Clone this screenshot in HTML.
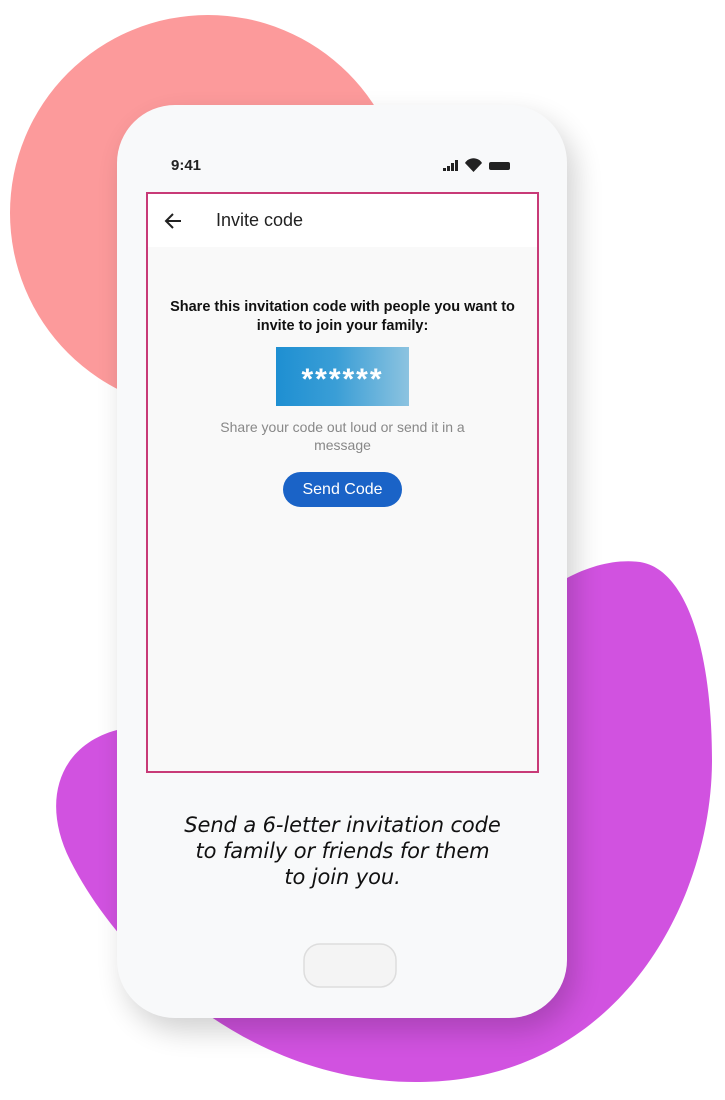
<!DOCTYPE html>
<html><head><meta charset="utf-8"><style>
body{margin:0;width:725px;height:1100px;background:#fff;position:relative;overflow:hidden;font-family:"Liberation Sans",sans-serif}
.abs{position:absolute}
</style></head><body>
<svg class="abs" style="left:0;top:0" width="725" height="1100">
<defs><filter id="sh" x="-20%" y="-20%" width="140%" height="140%"><feGaussianBlur stdDeviation="14"/></filter>
<linearGradient id="g" x1="0" x2="1"><stop offset="0" stop-color="#1e8fd2"/><stop offset="0.45" stop-color="#3a9ed6"/><stop offset="1" stop-color="#8cc3e0"/></linearGradient></defs>
<circle cx="208" cy="213" r="198" fill="#fc9a9b"/>
<path d="M117 730 L567 578 C590 566 615 559 640 562 C690 570 712 660 712 760 C712 900 620 1080 420 1082 C250 1084 120 960 70 860 C40 800 60 745 117 730 Z" fill="#d152e0"/>
<rect x="125" y="118" width="450" height="913" rx="58" fill="#000" opacity="0.18" filter="url(#sh)"/>
<rect x="117" y="105" width="450" height="913" rx="58" fill="#f8f9fa"/>
<rect x="147" y="193" width="391" height="579" fill="#f9f9f9" stroke="#c83a77" stroke-width="2"/>
<rect x="148" y="194" width="389" height="53" fill="#fff"/>
<path d="M181 221 H167 M173 214 L166 221 L173 228" stroke="#222" stroke-width="2" fill="none"/>
<rect x="276" y="347" width="133" height="59" fill="url(#g)"/>
<rect x="283" y="472" width="119" height="35" rx="17.5" fill="#1a63c7"/>
<rect x="304" y="944" width="92" height="43" rx="16" fill="#f4f4f4" stroke="#ddd" stroke-width="1.5"/>
<rect x="455" y="160" width="3" height="11" fill="#222"/><rect x="451" y="163" width="3" height="8" fill="#222"/><rect x="447" y="166" width="3" height="5" fill="#222"/><rect x="443" y="168" width="3" height="3" fill="#222"/>
<path d="M465 163 A10 10 0 0 1 482 163 L473.5 172 Z" fill="#222"/>
<rect x="489" y="162" width="21" height="8" rx="2" fill="#222"/>
</svg>
<div class="abs" style="left:171px;top:157px;font-size:15px;font-weight:bold;color:#222">9:41</div>
<div class="abs" style="left:216px;top:210px;font-size:18px;color:#222">Invite code</div>
<div class="abs" style="left:150px;top:298px;width:385px;text-align:center;font-size:14.5px;font-weight:bold;line-height:19px;color:#111;white-space:nowrap">Share this invitation code with people you want to<br>invite to join your family:</div>
<div class="abs" style="left:276px;top:363px;width:133px;text-align:center;font-size:30px;font-weight:bold;letter-spacing:2px;color:#fff;line-height:34px">******</div>
<div class="abs" style="left:200px;top:418px;width:285px;text-align:center;font-size:14px;line-height:18px;color:#888">Share your code out loud or send it in a message</div>
<div class="abs" style="left:283px;top:481px;width:119px;text-align:center;font-size:16px;color:#fff">Send Code</div>
<div class="abs" style="left:140px;top:812px;width:405px;text-align:center;font-size:21px;font-style:italic;line-height:26px;color:#111;font-family:'DejaVu Sans',sans-serif;letter-spacing:-0.1px">Send a 6-letter invitation code<br>to family or friends for them<br>to join you.</div>
</body></html>
